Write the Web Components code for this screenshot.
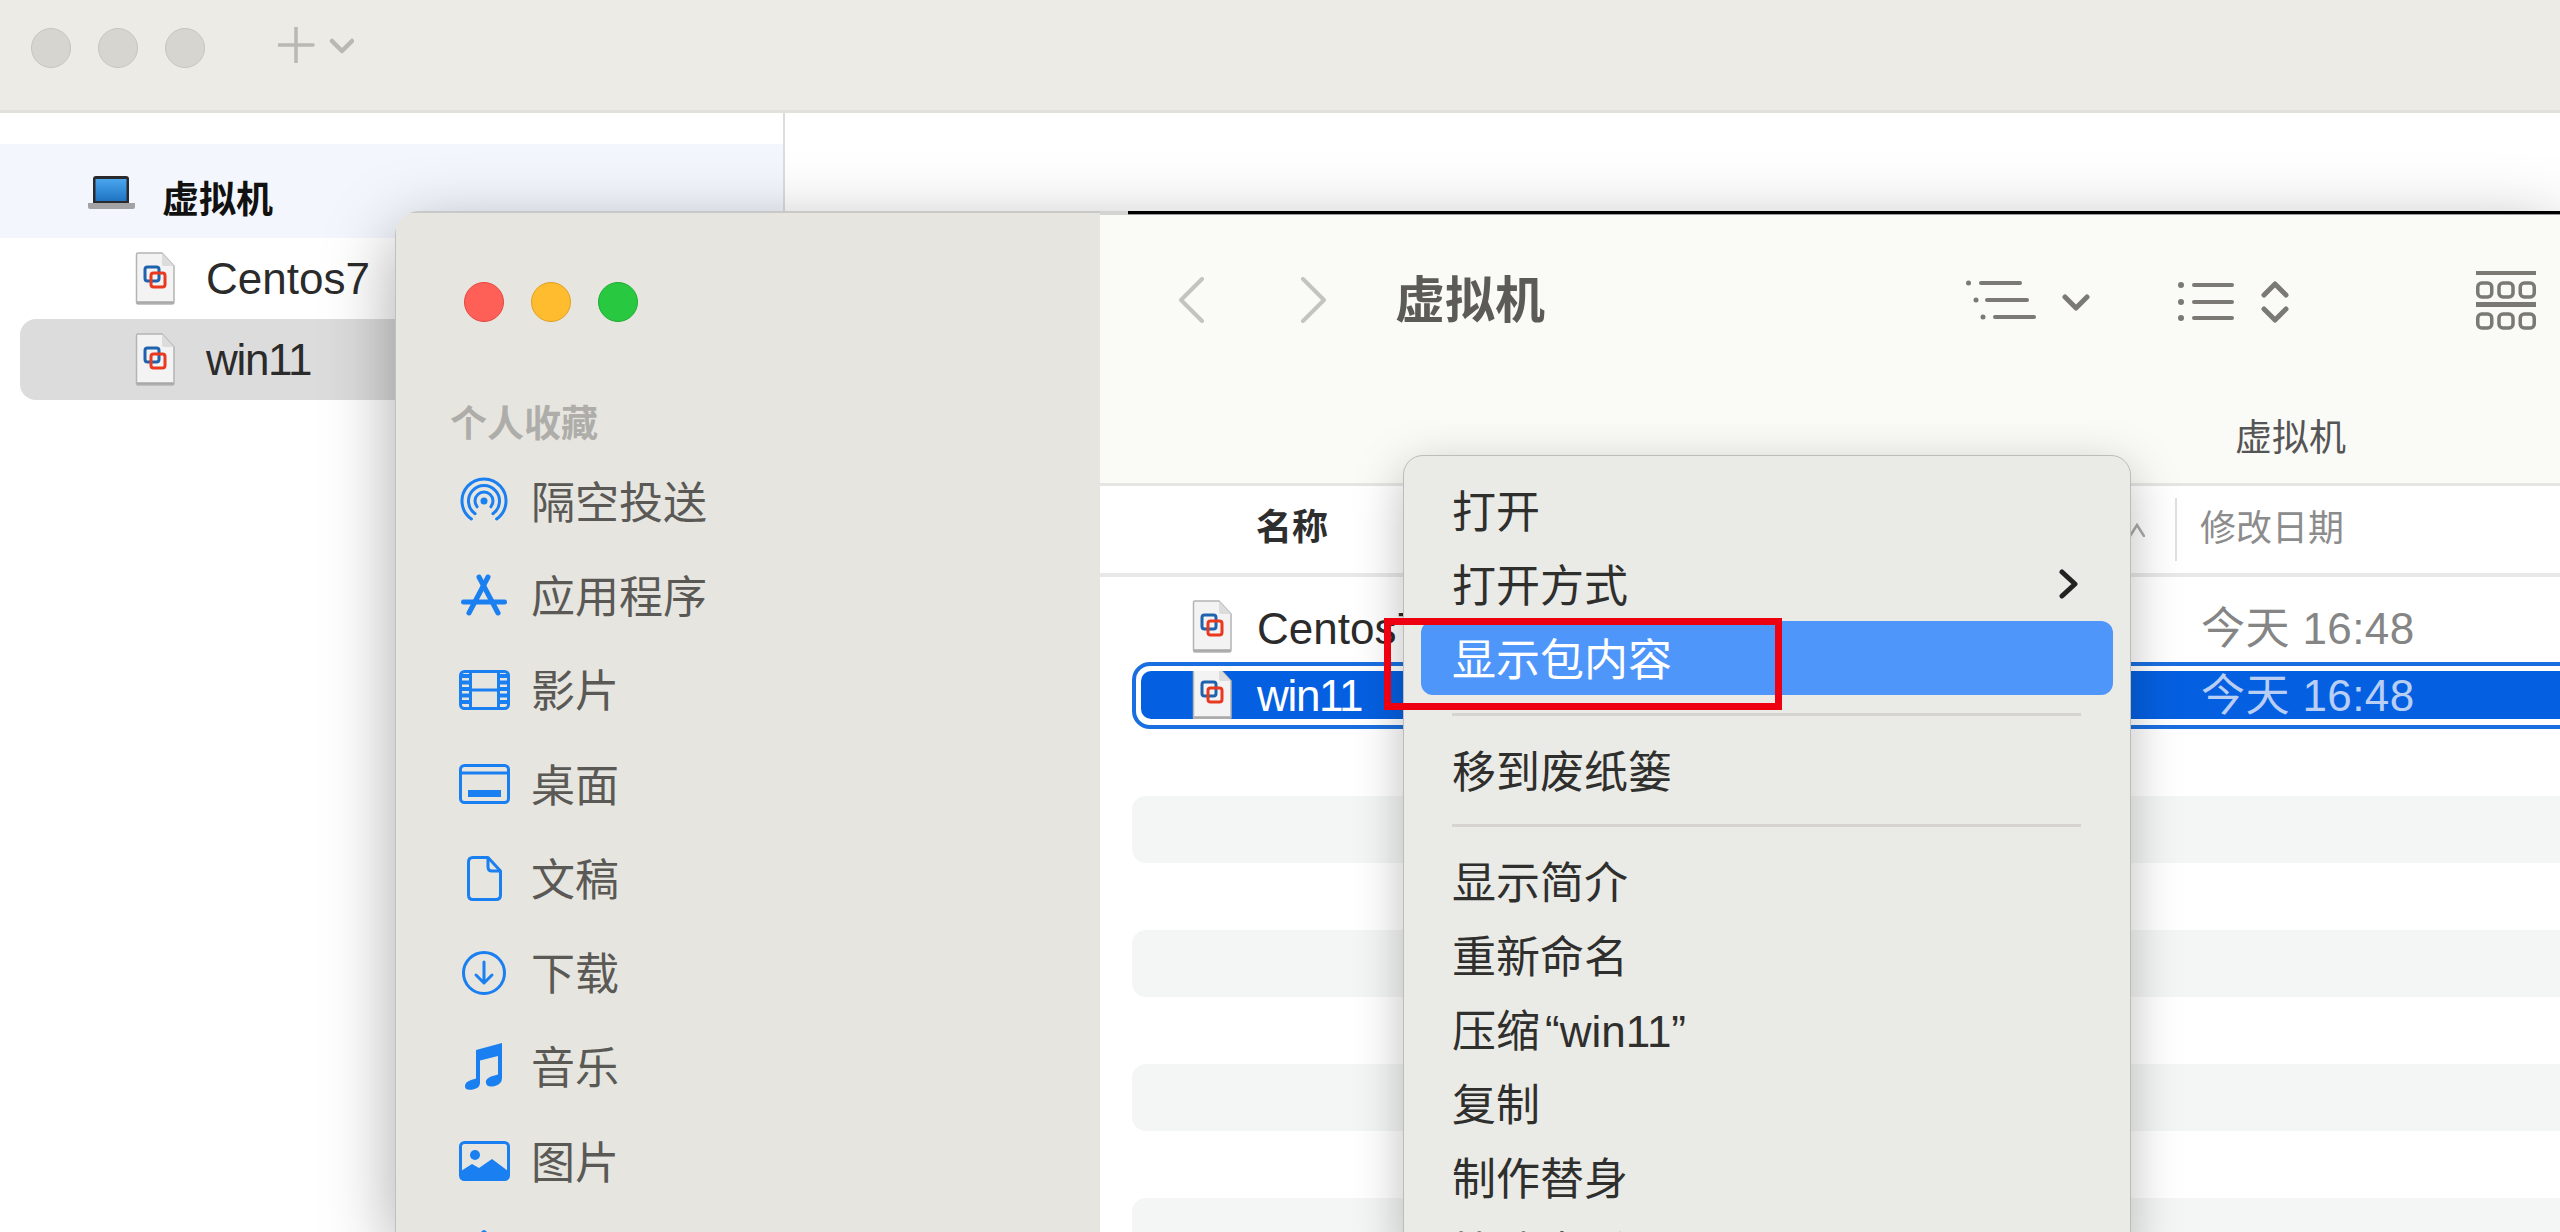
<!DOCTYPE html>
<html lang="zh">
<head>
<meta charset="utf-8">
<title>虚拟机</title>
<style>
    html, body{ margin: 0; padding: 0; }
    body{
        position: relative;
        width: 2560px;
        height: 1232px;
        overflow: hidden;
        background: #fff;
        font-family: "Liberation Sans", "Noto Sans CJK SC", sans-serif;
    }
</style>
</head>
<body>

<back-window>
    <tree-row heading label="虚拟机">
        <svg slot="icon" width="47" height="33" viewBox="0 0 47 33">
            <defs><linearGradient id="lap" x1="0" y1="0" x2="0" y2="1"><stop offset="0" stop-color="#4aa6ee"/><stop offset="1" stop-color="#1f74c2"/></linearGradient></defs>
            <path d="M5 3q0-3 3-3h30q3 0 3 3v24H5z" fill="#2a2a2c"/>
            <rect x="7.500" y="3" width="31" height="22" fill="url(#lap)"/>
            <path d="M0 27h47v4q0 2-2 2H2q-2 0-2-2z" fill="#a3a3a6"/>
        </svg>
    </tree-row>
    <tree-row label="Centos7"><vm-file slot="icon"></vm-file></tree-row>
    <tree-row active label="win11" style="--sp:-1.300px"><vm-file slot="icon"></vm-file></tree-row>
</back-window>

<finder-window>
    <side-item label="隔空投送">
        <svg slot="icon" width="48" height="48" viewBox="0 0 48 48" fill="none" stroke="#1a7ff0" stroke-width="3" stroke-linecap="round">
            <path d="M11.400 42A22 22 0 1 1 36.600 42"/>
            <path d="M15.100 36.700A15.500 15.500 0 1 1 32.900 36.700"/>
            <path d="M17.100 29.800A9 9 0 1 1 30.900 29.800"/>
            <circle cx="24" cy="24" r="3.500" fill="#1a7ff0" stroke="none"/>
        </svg>
    </side-item>
    <side-item label="应用程序">
        <svg slot="icon" width="46" height="42" viewBox="0 0 46 42" fill="none" stroke="#1a7ff0" stroke-width="5" stroke-linecap="round">
            <path d="M18 3L37 39"/><path d="M27 3L8 39"/><path d="M2.500 28H43.500"/>
        </svg>
    </side-item>
    <side-item label="影片">
        <svg slot="icon" width="51" height="40" viewBox="0 0 51 40" fill="none" stroke="#1a7ff0" stroke-width="3">
            <rect x="1.500" y="1.500" width="48" height="37" rx="4"/>
            <path d="M11.500 1.500V38.500M39.500 1.500V38.500M11.500 20H39.500"/>
            <path d="M6.500 4V36M44.500 4V36" stroke-width="7" stroke-dasharray="4 2.500"/>
        </svg>
    </side-item>
    <side-item label="桌面">
        <svg slot="icon" width="51" height="40" viewBox="0 0 51 40" fill="none" stroke="#1a7ff0" stroke-width="3">
            <rect x="1.500" y="1.500" width="48" height="37" rx="4"/>
            <path d="M1.500 9H49.500"/>
            <rect x="9" y="26" width="33" height="7" fill="#1a7ff0" stroke="none"/>
        </svg>
    </side-item>
    <side-item label="文稿">
        <svg slot="icon" width="35" height="45" viewBox="0 0 35 45" fill="none" stroke="#1a7ff0" stroke-width="3" stroke-linejoin="round">
            <path d="M6 1.500H21L33.500 15V39q0 4.500-4.500 4.500H6q-4.500 0-4.500-4.500V6q0-4.500 4.500-4.500z"/>
            <path d="M21 1.500V11q0 4 4 4H33.500"/>
        </svg>
    </side-item>
    <side-item label="下载">
        <svg slot="icon" width="44" height="44" viewBox="0 0 44 44" fill="none" stroke="#1a7ff0" stroke-width="3" stroke-linecap="round" stroke-linejoin="round">
            <circle cx="22" cy="22" r="20.500"/>
            <path d="M22 11V31M14 24L22 32L30 24"/>
        </svg>
    </side-item>
    <side-item label="音乐">
        <svg slot="icon" width="38" height="47" viewBox="0 0 38 47" fill="#1a7ff0">
            <path d="M11 7L37 0V35q0 6-7 8q-8 2-9-3q-1-4 5-6.500l7-2V13L15 17.500V40q0 5-7 6.500q-8 1.500-8-3.500q0-4 6-6l5-1.500z"/>
        </svg>
    </side-item>
    <side-item label="图片">
        <svg slot="icon" width="51" height="40" viewBox="0 0 51 40" fill="none" stroke="#1a7ff0" stroke-width="3">
            <rect x="1.500" y="1.500" width="48" height="37" rx="4"/>
            <circle cx="16" cy="14" r="5" fill="#1a7ff0" stroke="none"/>
            <path d="M2 30L13 23L20 27L33 18L49 30V35q0 4-4 4H6q-4 0-4-4z" fill="#1a7ff0" stroke="none"/>
        </svg>
    </side-item>
    <side-item label="">
        <svg slot="icon" width="54" height="54" viewBox="0 0 54 54" fill="#1a7ff0" stroke="#1a7ff0" stroke-width="4" stroke-linejoin="round">
            <path d="M27 3L50 24H43V50H11V24H4z"/>
        </svg>
    </side-item>

    <file-row slot="rows" name="Centos7" date="今天 16:48"></file-row>
    <file-row slot="rows" selected name="win11" date="今天 16:48" style="--sp:-1.300px"></file-row>
    <file-row slot="rows"></file-row>
    <file-row slot="rows" striped></file-row>
    <file-row slot="rows"></file-row>
    <file-row slot="rows" striped></file-row>
    <file-row slot="rows"></file-row>
    <file-row slot="rows" striped></file-row>
    <file-row slot="rows"></file-row>
    <file-row slot="rows" striped></file-row>
</finder-window>

<context-menu>
    <menu-item>打开</menu-item>
    <menu-item submenu>打开方式</menu-item>
    <menu-item active>显示包内容</menu-item>
    <menu-sep first></menu-sep>
    <menu-item>移到废纸篓</menu-item>
    <menu-sep></menu-sep>
    <menu-item>显示简介</menu-item>
    <menu-item>重新命名</menu-item>
    <menu-item>压缩<span style="padding:0 5px">“win11”</span></menu-item>
    <menu-item>复制</menu-item>
    <menu-item>制作替身</menu-item>
    <menu-item>快速查看</menu-item>
</context-menu>

<red-box></red-box>

<script>
//base comun: cada elemento solo define su template y su style
class baseElement extends HTMLElement{
    constructor(){
        super();
        this.attachShadow({mode: 'open'});
    }
    getMarkup(){ return ''; }
    getStyle(){ return ''; }
    getTemplate(){
        const template = document.createElement("template");
        template.innerHTML = `<style>${this.getStyle()}</style>${this.getMarkup()}`;
        return template;
    }
    connectedCallback(){
        this.shadowRoot.appendChild(this.getTemplate().content.cloneNode(true));
    }
}

//los tres botones de la ventana
class macLights extends baseElement{
    getMarkup(){ return `<i class="a"></i><i class="b"></i><i class="c"></i>`; }
    getStyle(){
        return `
            :host{ display: flex; gap: 27px; }
            i{ width: 40px; height: 40px; border-radius: 50%; box-sizing: border-box; border: 1px solid #c6c5c0; background: #d6d5d0; }
            :host([on]) .a{ background: #fe5f57; border-color: #e5483f; }
            :host([on]) .b{ background: #febc2e; border-color: #e0a024; }
            :host([on]) .c{ background: #28c840; border-color: #1fae35; }
        `;
    }
}

//icono del archivo de la maquina virtual
class vmFile extends baseElement{
    getMarkup(){
        return `
            <svg width="40" height="53" viewBox="0 0 40 53">
                <path d="M1.500 2.500q0-1.500 1.500-1.500H27L39 14V50q0 2-2 2H3q-1.500 0-1.500-2z" fill="#f3f3f3" stroke="#b4b4b4" stroke-width="1.500"/>
                <path d="M2 50.500H38.500" stroke="#a8a8a8" stroke-width="2.500"/>
                <path d="M27 1L39 14H29q-2 0-2-2z" fill="#dcdcdc"/>
                <rect x="10" y="15" width="14" height="14" rx="2.500" fill="none" stroke="#1f62ad" stroke-width="3"/>
                <rect x="16" y="21" width="14" height="14" rx="2.500" fill="none" stroke="#e9391f" stroke-width="3"/>
            </svg>
        `;
    }
    getStyle(){ return `:host{ display: block; width: 40px; height: 53px; } svg{ display: block; }`; }
}

//filas del arbol en la ventana de atras
class treeRow extends baseElement{
    getMarkup(){
        return `<span class="ico"><slot name="icon"></slot></span><span class="txt">${this.getAttribute('label')}</span>`;
    }
    getStyle(){
        return `
            :host{ display: flex; align-items: center; height: 81px; margin-left: 20px; border-radius: 16px; padding-left: 115px; font-size: 44px; color: #2b2b2b; }
            :host([active]){ background: #dcdcdc; }
            .ico{ display: flex; width: 71px; }
            .txt{ letter-spacing: var(--sp, 0); }
            :host([heading]){ height: 94px; margin-left: 0; border-radius: 0; padding-left: 88px; background: #f3f6fd; font-size: 37px; font-weight: bold; color: #111; }
            :host([heading]) .ico{ width: 74px; padding-top: 2px; }
            :host([heading]) .txt{ padding-top: 12px; }
        `;
    }
}

class backWindow extends baseElement{
    getMarkup(){
        return `
            <div class="bar">
                <mac-lights></mac-lights>
                <svg class="plus" width="76" height="36" viewBox="0 0 76 36" fill="none" stroke="#b9b8b3" stroke-linecap="round">
                    <path d="M18 1V35M1 18H35" stroke-width="3.500"/>
                    <path d="M54 14L64 24L74 14" stroke-width="4.500" stroke-linejoin="round"/>
                </svg>
            </div>
            <div class="body">
                <div class="tree"><slot></slot></div>
            </div>
        `;
    }
    getStyle(){
        return `
            :host{ display: block; height: 1232px; background: #fff; }
            .bar{ display: flex; align-items: center; height: 110px; padding: 0 0 0 31px; background: #ecebe6; border-bottom: 3px solid #e1e0db; }
            mac-lights{ margin-top: -14px; }
            .plus{ margin: -20px 0 0 73px; }
            .body{ height: 1119px; }
            .tree{ width: 785px; height: 100%; padding-top: 31px; box-sizing: border-box; border-right: 2px solid #dcdcdc; }
        `;
    }
}

//barra de arriba de la ventana finder
class finderToolbar extends baseElement{
    getMarkup(){
        return `
            <div class="line">
                <svg class="back" width="27" height="46" viewBox="0 0 27 46" fill="none" stroke="#c4c3bf" stroke-width="4" stroke-linecap="round" stroke-linejoin="round"><path d="M24 2L3 23L24 44"/></svg>
                <svg class="next" width="27" height="46" viewBox="0 0 27 46" fill="none" stroke="#c4c3bf" stroke-width="4" stroke-linecap="round" stroke-linejoin="round"><path d="M3 2L24 23L3 44"/></svg>
                <span class="title">虚拟机</span>
                <span class="tools">
                    <svg width="124" height="60" viewBox="0 0 124 60" fill="none" stroke="#7a7974" stroke-width="4" stroke-linecap="round" stroke-linejoin="round">
                        <circle cx="2.500" cy="13" r="2.500" fill="#7a7974" stroke="none"/><circle cx="10" cy="30" r="2.500" fill="#7a7974" stroke="none"/><circle cx="17" cy="47" r="2.500" fill="#7a7974" stroke="none"/>
                        <path d="M15 13H54M21 30H61M29 47H68"/>
                        <path d="M99 27L110 38L121 27" stroke-width="5"/>
                    </svg>
                    <svg width="112" height="60" viewBox="0 0 112 60" fill="none" stroke="#7a7974" stroke-width="4" stroke-linecap="round" stroke-linejoin="round">
                        <circle cx="3" cy="15" r="3" fill="#7a7974" stroke="none"/><circle cx="3" cy="32" r="3" fill="#7a7974" stroke="none"/><circle cx="3" cy="48" r="3" fill="#7a7974" stroke="none"/>
                        <path d="M16 15H54M16 32H54M16 48H54"/>
                        <path d="M86 25L97 14L108 25M86 39L97 50L108 39" stroke-width="5"/>
                    </svg>
                    <svg width="60" height="60" viewBox="0 0 60 60" fill="none" stroke="#7a7974" stroke-width="3.500">
                        <rect x="0" y="1" width="60" height="4" fill="#7a7974" stroke="none"/>
                        <rect x="0" y="32" width="60" height="5" fill="#7a7974" stroke="none"/>
                        <rect x="1.750" y="13" width="14" height="14" rx="4"/><rect x="23" y="13" width="14" height="14" rx="4"/><rect x="44.250" y="13" width="14" height="14" rx="4"/>
                        <rect x="1.750" y="44" width="14" height="14" rx="4"/><rect x="23" y="44" width="14" height="14" rx="4"/><rect x="44.250" y="44" width="14" height="14" rx="4"/>
                    </svg>
                </span>
            </div>
            <div class="caption">虚拟机</div>
        `;
    }
    getStyle(){
        return `
            :host{ display: block; height: 271px; box-sizing: border-box; padding-top: 55px; background: #fafaf6; border-bottom: 3px solid #e5e5e3; color: #5c5b57; }
            .line{ display: flex; align-items: center; height: 60px; padding-left: 78px; }
            .next{ margin-left: 95px; }
            .title{ margin-left: 68px; font-size: 50px; font-weight: bold; line-height: 60px; padding-top: 2px; }
            .tools{ display: flex; margin-left: auto; padding-right: 24px; gap: 88px; }
            .tools svg:last-child{ margin-left: 98px; }
            .caption{ margin-top: 90px; padding-left: 1135px; font-size: 37px; line-height: 38px; color: #555; }
        `;
    }
}

//cabecera de columnas
class listHeader extends baseElement{
    getMarkup(){
        return `
            <span class="name">名称</span>
            <svg class="caret" width="16" height="14" viewBox="0 0 16 14" fill="none" stroke="#aaa" stroke-width="2.500" stroke-linecap="round"><path d="M1 13L8 2L15 13"/></svg>
            <i class="sep"></i>
            <span class="date">修改日期</span>
        `;
    }
    getStyle(){
        return `
            :host{ display: flex; align-items: center; height: 91px; box-sizing: border-box; padding-left: 156px; background: #fff; border-bottom: 4px solid #e8e8e8; font-size: 36px; }
            .name{ flex: 1; padding-bottom: 12px; font-weight: bold; color: #2e2e2e; }
            .caret{ margin-right: 30px; }
            .sep{ width: 2px; height: 63px; background: #e0e0e0; }
            .date{ width: 360px; margin-left: 23px; padding-bottom: 10px; color: #8c8c8c; }
        `;
    }
}

class fileRow extends baseElement{
    getMarkup(){
        const name = this.getAttribute('name');
        if(!name) return `<div class="fill"></div>`;
        return `
            <div class="fill">
                <vm-file></vm-file>
                <span class="name">${name}</span>
                <span class="date">${this.getAttribute('date')}</span>
            </div>
        `;
    }
    getStyle(){
        return `
            :host{ display: block; height: 67px; box-sizing: border-box; margin-right: -40px; border: 4px solid transparent; padding: 5px; border-radius: 14px; }
            .fill{ display: flex; align-items: center; height: 100%; padding-left: 51px; font-size: 44px; line-height: 49px; color: #2b2b2b; white-space: nowrap; }
            vm-file{ align-self: flex-start; margin: -4px 25px 0 0; flex: none; }
            .name{ width: 944px; letter-spacing: var(--sp, 0); }
            .date{ color: #858585; letter-spacing: .4px; }
            :host([striped]){ background: #f4f5f5; }
            :host([selected]){ border-color: #1a6fe0; border-radius: 18px; }
            :host([selected]) .fill{ overflow: hidden; height: 48px; background: #0560e1; border-radius: 10px 0 0 10px; color: #fff; }
            :host([selected]) .date{ color: #b9cef5; }
        `;
    }
}

class sideItem extends baseElement{
    getMarkup(){
        return `<span class="ico"><slot name="icon"></slot></span><span class="txt">${this.getAttribute('label')}</span>`;
    }
    getStyle(){
        return `
            :host{ display: flex; align-items: center; height: 94.300px; padding-left: 58px; font-size: 44px; color: #5a5955; }
            .ico{ display: flex; justify-content: center; width: 60px; margin-right: 17px; }
            .txt{ padding-bottom: 3px; }
        `;
    }
}

class finderWindow extends baseElement{
    getMarkup(){
        return `
            <div class="win">
                <aside>
                    <mac-lights on></mac-lights>
                    <div class="label">个人收藏</div>
                    <slot></slot>
                </aside>
                <main>
                    <div class="rule"><i></i></div>
                    <finder-toolbar></finder-toolbar>
                    <list-header></list-header>
                    <div class="rows"><slot name="rows"></slot></div>
                </main>
            </div>
        `;
    }
    getStyle(){
        return `
            :host{ position: absolute; left: 395px; top: 211px; right: 0; bottom: 0; border-radius: 24px 0 0 0; box-shadow: 0 20px 70px rgba(0,0,0,.34); }
            .win{ display: flex; height: 100%; overflow: hidden; border-radius: 24px 0 0 0; }
            aside{ width: 705px; flex: none; box-sizing: border-box; padding-top: 69px; background: #e6e5e0; border-top: 2px solid #c8c8c8; border-left: 1px solid #c0c0c0; }
            mac-lights{ margin-left: 68px; }
            .label{ margin: 83px 0 9px 54px; font-size: 37px; line-height: 40px; font-weight: bold; color: #aeada9; }
            main{ flex: 1; min-width: 0; background: #fff; }
            .rule{ height: 4px; background: #d4d4d2; }
            .rule i{ display: block; height: 4px; margin-left: 28px; background: linear-gradient(#000 70%, #999 70%); }
            .rows{ padding: 18px 0 0 32px; }
        `;
    }
}

//menu contextual, encima de todo
class contextMenu extends baseElement{
    getMarkup(){ return `<slot></slot>`; }
    getStyle(){
        return `
            :host{ position: absolute; left: 1403px; top: 455px; width: 728px; height: 800px; box-sizing: border-box; padding: 17px 17px 0; background: #eaeae6; border: 1px solid #bdbcb8; border-radius: 20px; box-shadow: 0 14px 50px rgba(0,0,0,.26); }
        `;
    }
}

class menuItem extends baseElement{
    getMarkup(){
        const arrow = this.hasAttribute('submenu')
            ? `<svg width="20" height="30" viewBox="0 0 20 30" fill="none" stroke="#222" stroke-width="5" stroke-linecap="round" stroke-linejoin="round"><path d="M3 3L16 15L3 27"/></svg>`
            : '';
        return `<span class="txt"><slot></slot></span>${arrow}`;
    }
    getStyle(){
        return `
            :host{ display: flex; align-items: center; justify-content: space-between; height: 74px; padding: 0 34px 0 31px; font-size: 44px; color: #2f2f2d; border-radius: 12px; }
            .txt{ padding-bottom: 3px; }
            :host([active]){ background: #4f96fb; color: #fff; }
        `;
    }
}

class menuSep extends baseElement{
    getStyle(){
        return `
            :host{ display: block; height: 3px; margin: 17px 32px 17px 31px; background: #d5d4d0; }
            :host([first]){ margin-top: 18px; }
        `;
    }
}

//recuadro rojo de la anotacion
class redBox extends baseElement{
    getStyle(){
        return `:host{ position: absolute; left: 1384px; top: 618px; width: 398px; height: 92px; box-sizing: border-box; border: 7px solid #ee0010; }`;
    }
}

customElements.define('mac-lights', macLights);
customElements.define('vm-file', vmFile);
customElements.define('tree-row', treeRow);
customElements.define('back-window', backWindow);
customElements.define('finder-toolbar', finderToolbar);
customElements.define('list-header', listHeader);
customElements.define('file-row', fileRow);
customElements.define('side-item', sideItem);
customElements.define('finder-window', finderWindow);
customElements.define('context-menu', contextMenu);
customElements.define('menu-item', menuItem);
customElements.define('menu-sep', menuSep);
customElements.define('red-box', redBox);
</script>
</body>
</html>
